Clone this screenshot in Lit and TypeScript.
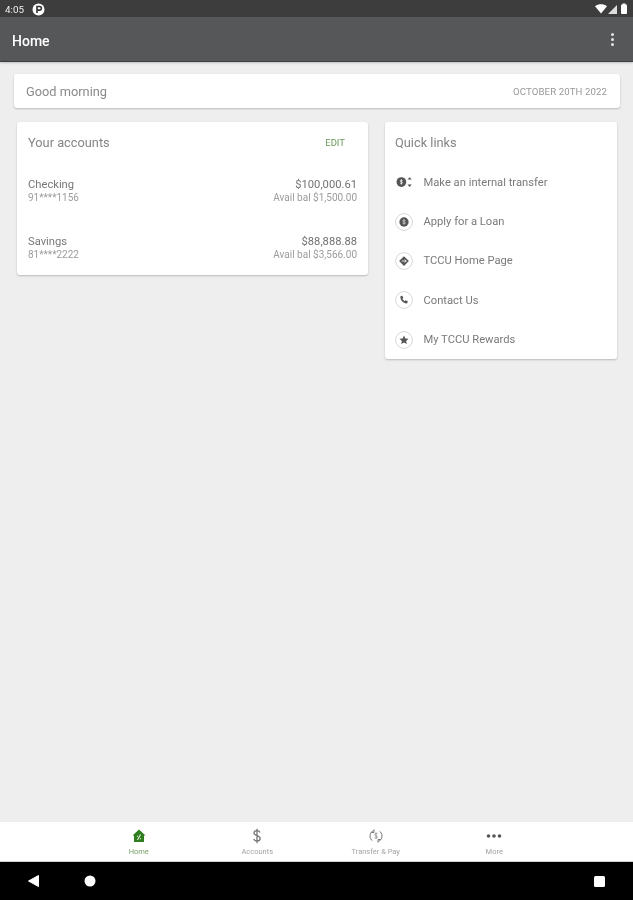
import { LitElement, html, css, svg } from "lit";
import { customElement } from "lit/decorators.js";

const quick = [
  { label: "Make an internal transfer", icon: "transfer" },
  { label: "Apply for a Loan", icon: "loan" },
  { label: "TCCU Home Page", icon: "web" },
  { label: "Contact Us", icon: "phone" },
  { label: "My TCCU Rewards", icon: "star" },
];

const ring = svg`<circle cx="12" cy="12" r="11.2" fill="none" stroke="#c4c4c4" stroke-width="0.9"/>`;

function quickIcon(name: string) {
  switch (name) {
    case "transfer":
      return svg`<circle cx="8.5" cy="12" r="6.5" fill="#555"/>
        <path d="M8.5 8.5v7M10 10c-.5-.7-2.8-.9-3 .5-.1 1.5 3 1 3 2.500-.1 1.300-2.500 1.200-3.200.4" stroke="#fff" stroke-width="1" fill="none"/>
        <path d="M19.500 5.500l2.800 3.200h-5.600zM19.500 18.500l-2.800-3.200h5.600z" fill="#555"/>`;
    case "loan":
      return svg`${ring}<circle cx="12" cy="12" r="6.200" fill="#555"/>
        <path d="M14 10c-.6-.8-3.600-1-3.800.5-.1 1.500 3.800 1 3.800 2.700 0 1.300-3 1.300-4 .4M12 8.500v7" stroke="#ddd" stroke-width=".9" fill="none"/>`;
    case "web":
      return svg`${ring}<path d="M12 5.500l6.500 6.500-6.500 6.500-6.500-6.500z" fill="#555"/>
        <path d="M9 12h6M13 10l2 2-2 2" stroke="#fff" stroke-width="1.100" fill="none"/>`;
    case "phone":
      return svg`${ring}<path d="M7.600 6.800l2.200-.6 1.300 3-1.300 1.200c.7 1.400 1.700 2.400 3.100 3.100l1.200-1.300 3 1.300-.6 2.200c-.2.600-.7.900-1.300.8-4.200-.5-7.500-3.800-8-8-.1-.6.200-1.100.4-1.700z" fill="#555"/>`;
    default:
      return svg`${ring}<path d="M12 6l1.800 4 4.300.4-3.300 2.800 1 4.200-3.800-2.200-3.800 2.200 1-4.200-3.300-2.800 4.300-.4z" fill="#555"/>`;
  }
}

@customElement("app-root")
export class AppRoot extends LitElement {
  static styles = css`
    :host {
      display: block;
      font-family: Roboto, "Liberation Sans", sans-serif;
      color: #666;
    }
    .page {
      width: 633px;
      height: 900px;
      display: flex;
      flex-direction: column;
      background: #eeeeee;
      overflow: hidden;
      filter: blur(0.35px);
    }
    .status {
      height: 17px;
      flex: none;
      background: #3d3d3d;
      display: flex;
      align-items: center;
      padding: 1px 3px 0 5px;
      box-sizing: border-box;
      color: #eee;
      font-size: 9.800px;
      gap: 8px;
    }
    .status .spacer { flex: 1; }
    .status .sys { display: flex; align-items: center; }
    .appbar {
      height: 44px;
      flex: none;
      background: #565758;
      display: flex;
      align-items: center;
      justify-content: space-between;
      padding: 0 19px 0 12px;
      color: #fff;
      font-size: 14px;
      font-weight: 500;
      border-bottom: 1px solid #3f3f3f;
      box-shadow: 0 1px 2px rgba(0, 0, 0, 0.2);
      position: relative;
    }
    .appbar .label { padding-top: 3px; }
    .dots { display: flex; flex-direction: column; gap: 2px; }
    .dots i { width: 3px; height: 3px; border-radius: 50%; background: #e4e4e4; display: block; }
    .main {
      flex: 1;
      min-height: 0;
      padding: 12px 13px 0 14px;
      display: flex;
      flex-direction: column;
      gap: 14px;
    }
    .card {
      background: #fff;
      border-radius: 3px;
      box-shadow: 0 1px 2px rgba(0, 0, 0, 0.22);
    }
    .greeting {
      height: 34px;
      display: flex;
      align-items: center;
      justify-content: space-between;
      padding: 0 13px 0 12px;
      font-size: 12.800px;
      color: #8a8a8a;
    }
    .date { font-size: 9.650px; color: #989898; letter-spacing: 0.1px; }
    .columns {
      display: flex;
      align-items: flex-start;
      gap: 17px;
      padding: 0 3px;
    }
    .accounts { width: 351px; height: 153px; flex: none; padding: 0 11px; box-sizing: border-box; }
    .links { width: 232px; height: 237px; flex: none; padding: 0 10px; box-sizing: border-box; }
    .title {
      height: 41px;
      display: flex;
      align-items: center;
      justify-content: space-between;
      font-size: 12.800px;
      color: #858585;
    }
    .links .title { height: 40.500px; }
    .edit { font-size: 9.500px; color: #6a9a5a; padding-right: 12px; }
    .acct {
      display: flex;
      justify-content: space-between;
      height: 57px;
      padding-top: 15px;
      box-sizing: border-box;
    }
    .acct div { display: flex; flex-direction: column; gap: 1px; }
    .acct .right { align-items: flex-end; }
    .name { font-size: 11.200px; color: #777; line-height: 13px; }
    .sub { font-size: 10px; color: #9c9c9c; line-height: 12px; }
    .amount { font-size: 11.200px; color: #727272; line-height: 13px; }
    .link {
      height: 39.400px;
      display: flex;
      align-items: center;
      gap: 10.500px;
      font-size: 11.200px;
      color: #7a7a7a;
    }
    .link svg { width: 18px; height: 18px; flex: none; }
    .nav {
      height: 40px;
      flex: none;
      background: #fff;
      border-bottom: 1px solid #cfcfcf;
      box-sizing: border-box;
      display: flex;
      justify-content: center;
    }
    .tab {
      width: 118.500px;
      display: flex;
      flex-direction: column;
      align-items: center;
      font-size: 7.500px;
      color: #a4a4a4;
      padding-top: 6px;
      box-sizing: border-box;
      gap: 3px;
    }
    .tab svg { width: 16px; height: 16px; display: block; }
    .tab.on { color: #7aa368; }
    .sysnav {
      height: 38px;
      flex: none;
      background: #000;
      display: flex;
      align-items: center;
      padding: 0 28px 0 28px;
      gap: 45px;
    }
    .sysnav svg { display: block; }
    .sysnav .spacer { flex: 1; }
  `;

  render() {
    return html`
      <div class="page">
        <div class="status">
          <span>4:05</span>
          <svg width="13" height="13" viewBox="0 0 13 13">
            <circle cx="6.500" cy="6.500" r="6" fill="#fff"/>
            <path d="M5 10V3.500h2.600a1.800 1.800 0 010 3.600H5" fill="none" stroke="#333" stroke-width="1.600"/>
          </svg>
          <span class="spacer"></span>
          <span class="sys">
            <svg width="36" height="12" viewBox="0 0 36 12">
              <path d="M1 3.200C4.500 .6 9.500 .6 13 3.200L7 10.500z" fill="#fff"/>
              <path d="M23 2v9h-9z" fill="#ddd"/>
              <rect x="27" y="1.500" width="6" height="9.500" rx="1" fill="#fff"/>
              <rect x="28.500" y=".5" width="3" height="1.500" fill="#fff"/>
            </svg>
          </span>
        </div>
        <div class="appbar">
          <span class="label">Home</span>
          <span class="dots"><i></i><i></i><i></i></span>
        </div>
        <div class="main">
          <div class="card greeting">
            <span>Good morning</span>
            <span class="date">OCTOBER 20TH 2022</span>
          </div>
          <div class="columns">
            <div class="card accounts">
              <div class="title"><span>Your accounts</span><span class="edit">EDIT</span></div>
              <div class="acct">
                <div><span class="name">Checking</span><span class="sub">91****1156</span></div>
                <div class="right"><span class="amount">$100,000.61</span><span class="sub">Avail bal $1,500.00</span></div>
              </div>
              <div class="acct">
                <div><span class="name">Savings</span><span class="sub">81****2222</span></div>
                <div class="right"><span class="amount">$88,888.88</span><span class="sub">Avail bal $3,566.00</span></div>
              </div>
            </div>
            <div class="card links">
              <div class="title"><span>Quick links</span></div>
              ${quick.map(
                (q) => html`<div class="link">
                  <svg viewBox="0 0 24 24">${quickIcon(q.icon)}</svg>
                  <span>${q.label}</span>
                </div>`
              )}
            </div>
          </div>
        </div>
        <div class="nav">
          <div class="tab on">
            <svg viewBox="0 0 16 16">
              <path d="M8 1.500L14.500 7.500H13V14H3V7.500H1.500z" fill="#2f7d1e"/>
              <path d="M9.500 6.500L6.500 12M6 8l1 .5M9 10.500l1 .5" stroke="#dfe9d8" stroke-width="1.200" fill="none"/>
            </svg>
            <span>Home</span>
          </div>
          <div class="tab">
            <svg viewBox="0 0 16 16">
              <path d="M11 4.500C10.500 3 9.300 2.700 8 2.700 6.300 2.700 5 3.500 5 5c0 3.300 6.200 1.800 6.200 5.500 0 1.600-1.500 2.500-3.200 2.500-1.500 0-2.800-.6-3.300-2M8 .8v14.400" stroke="#777" stroke-width="1.300" fill="none"/>
            </svg>
            <span>Accounts</span>
          </div>
          <div class="tab">
            <svg viewBox="0 0 16 16">
              <path d="M5.500 2.500A6 6 0 003.500 12l1 .8M10.500 13.500A6 6 0 0012.500 4l-1-.8" stroke="#777" stroke-width="1" fill="none"/>
              <path d="M6 1.500v3H3.500M10 14.500v-3h2.500" stroke="#777" stroke-width="1" fill="none"/>
              <path d="M9.500 5.800C9 5 6.800 5 6.800 6.400c0 1.500 2.600 1.200 2.600 2.800 0 1.200-2.100 1.300-2.800.4M8 4.500v6.500" stroke="#888" stroke-width=".8" fill="none"/>
            </svg>
            <span>Transfer &amp; Pay</span>
          </div>
          <div class="tab">
            <svg viewBox="0 0 16 16">
              <circle cx="2.500" cy="8" r="1.800" fill="#555"/>
              <circle cx="8" cy="8" r="1.800" fill="#555"/>
              <circle cx="13.500" cy="8" r="1.800" fill="#555"/>
            </svg>
            <span>More</span>
          </div>
        </div>
        <div class="sysnav">
          <svg width="11" height="12" viewBox="0 0 11 12"><path d="M10.500 .5v11L.5 6z" fill="#fff" stroke="#fff" stroke-linejoin="round"/></svg>
          <svg width="12" height="12" viewBox="0 0 12 12"><circle cx="6" cy="6" r="5.500" fill="#fff"/></svg>
          <span class="spacer"></span>
          <svg width="11" height="11" viewBox="0 0 11 11"><rect width="11" height="11" rx="1.500" fill="#fff"/></svg>
        </div>
      </div>
    `;
  }
}
